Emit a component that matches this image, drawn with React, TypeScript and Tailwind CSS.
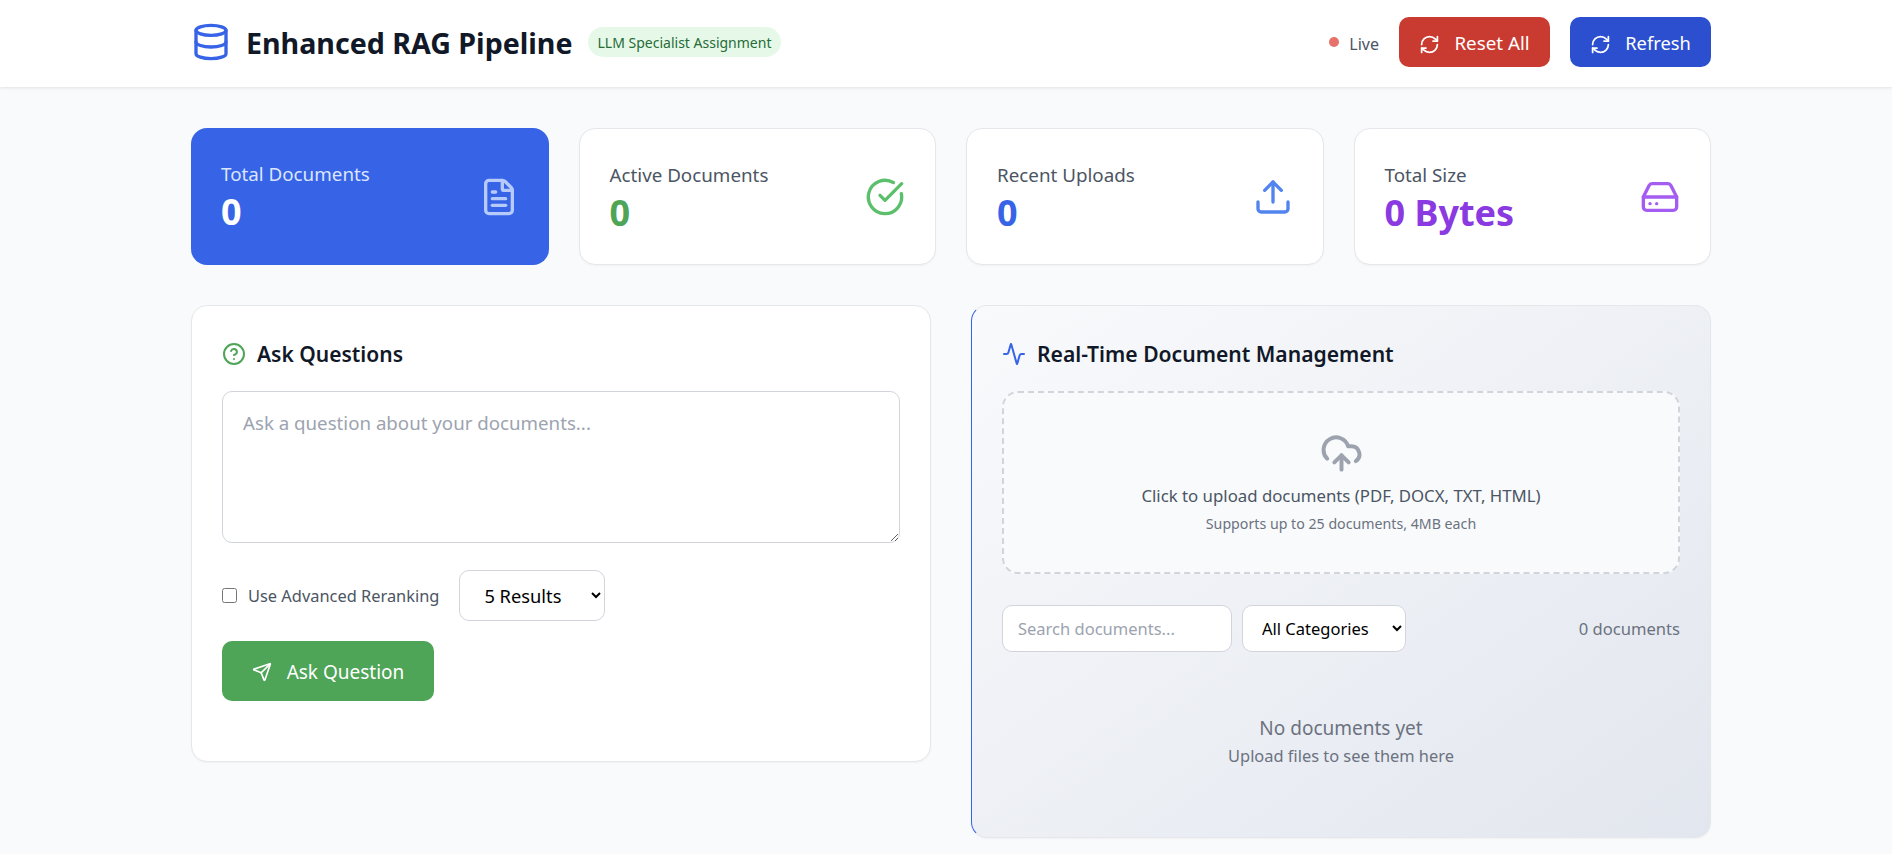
import { Activity, CircleCheckBig, CircleHelp, CloudUpload, Database, FileText, HardDrive, RefreshCw, Send, Upload } from 'lucide-react'

const stats = [
  { label: 'Active Documents', value: '0', valueClass: 'text-[#4ea457]', icon: <CircleCheckBig size={40} className="text-[#5cbf6b]" /> },
  { label: 'Recent Uploads', value: '0', valueClass: 'text-[#3763e6]', icon: <Upload size={40} className="text-[#5184ee]" /> },
  { label: 'Total Size', value: '0 Bytes', valueClass: 'text-[#8a3ae0]', icon: <HardDrive size={40} className="text-[#a55cf0]" /> },
]

export default function App() {
  return (
    <div className="min-h-[854px] bg-[#f9fafb] font-['Noto_Sans',sans-serif] text-[#111827]">
      {/* Header */}
      <header className="h-[87px] bg-white shadow-[0_1px_3px_rgba(0,0,0,0.1)] pl-[191px] pr-[181px] pb-[3px] flex items-center justify-between">
        <div className="flex items-center">
          <Database size={40} className="text-[#3763e6]" />
          <h1 className="ml-[15px] pt-[2px] text-[28.6px] font-bold leading-[36px] text-[#111827]">Enhanced RAG Pipeline</h1>
          <span className="ml-[15px] h-[30px] px-[10px] rounded-full bg-[#e6f9e9] text-[#276b38] text-[14px] flex items-center">LLM Specialist Assignment</span>
        </div>
        <div className="flex items-center">
          <span className="w-[10px] h-[10px] rounded-full bg-[#e5736c]" />
          <span className="ml-[10px] mt-[4px] text-[16px] text-[#4b5563]">Live</span>
          <button className="ml-[20px] h-[50px] w-[151px] pt-[2px] rounded-[10px] bg-[#c93a30] text-white text-[18.8px] flex items-center justify-center gap-[14px]">
            <RefreshCw size={21} className="mt-[3px]" />
            Reset All
          </button>
          <button className="ml-[20px] h-[50px] w-[141px] pt-[2px] rounded-[10px] bg-[#2c4fd0] text-white text-[18.3px] flex items-center justify-center gap-[14px]">
            <RefreshCw size={21} className="mt-[3px]" />
            Refresh
          </button>
        </div>
      </header>

      <main className="pl-[191px] pr-[181px] pt-[41px] pb-[16px]">
        {/* Stat cards */}
        <div className="grid grid-cols-4 gap-[30px]">
          <div className="h-[137px] rounded-[16px] bg-[#3763e6] p-[30px] flex items-center justify-between">
            <div className="pt-[3px]">
              <div className="text-[18.8px] leading-[28px] text-[#dbe6fe]">Total Documents</div>
              <div className="text-[36px] leading-[48px] font-bold text-white">0</div>
            </div>
            <FileText size={40} className="text-[#b6cbfb]" />
          </div>
          {stats.map((s) => (
            <div key={s.label} className="h-[137px] rounded-[16px] bg-white border border-[#e5e7eb] shadow-[0_1px_2px_rgba(0,0,0,0.04)] p-[30px] flex items-center justify-between">
              <div className="pt-[4px]">
                <div className="text-[18.8px] leading-[28px] text-[#4b5563]">{s.label}</div>
                <div className={`text-[36px] leading-[48px] font-bold ${s.valueClass}`}>{s.value}</div>
              </div>
              {s.icon}
            </div>
          ))}
        </div>

        <div className="mt-[40px] grid grid-cols-2 gap-[40px] items-start">
          {/* Ask questions */}
          <section className="h-[457px] rounded-[16px] bg-white border border-[#e5e7eb] shadow-[0_1px_2px_rgba(0,0,0,0.04)] p-[30px]">
            <h2 className="flex items-center gap-[11px] h-[36px] text-[21px] font-semibold text-[#111827]">
              <CircleHelp size={24} className="text-[#4ea457]" />
              <span className="mt-[2px]">Ask Questions</span>
            </h2>
            <textarea
              placeholder="Ask a question about your documents..."
              className="mt-[19px] block w-full h-[152px] rounded-[10px] border border-[#d1d5db] px-[20px] py-[17px] text-[18.7px] leading-[28px] placeholder:text-[#9ca3af] outline-none"
            />
            <div className="mt-[27px] flex items-center h-[51px]">
              <input type="checkbox" className="w-[15px] h-[15px]" />
              <label className="ml-[11px] mt-[2px] text-[16.4px] text-[#4b5563]">Use Advanced Reranking</label>
              <select className="ml-[20px] w-[146px] h-[51px] rounded-[10px] border border-[#d1d5db] bg-white pl-[20px] text-[18.3px] text-black">
                <option>5 Results</option>
              </select>
            </div>
            <button className="mt-[20px] w-[212px] h-[60px] pt-[2px] rounded-[10px] bg-[#4ea457] text-white text-[19px] flex items-center justify-center gap-[15px]">
              <Send size={20} />
              Ask Question
            </button>
          </section>

          {/* Document management */}
          <section className="h-[533px] rounded-[16px] border border-[#e5e7eb] border-l-[#3763e6] bg-gradient-to-br from-[#f9fafc] to-[#e2e6ee] shadow-[0_1px_2px_rgba(0,0,0,0.04)] p-[30px]">
            <h2 className="flex items-center gap-[11px] h-[36px] text-[21.1px] font-semibold text-[#111827]">
              <Activity size={24} className="text-[#3763e6]" />
              Real-Time Document Management
            </h2>
            <div className="mt-[19px] h-[183px] pt-[2px] rounded-[16px] border-2 border-dashed border-[#d1d5db] bg-[#f9fafc] flex flex-col items-center justify-center">
              <CloudUpload size={43} strokeWidth={2.2} className="text-[#9ca3af]" />
              <p className="mt-[7px] text-[16.8px] leading-[28px] text-[#4b5563]">Click to upload documents (PDF, DOCX, TXT, HTML)</p>
              <p className="mt-[2px] text-[14.2px] leading-[24px] text-[#6b7280]">Supports up to 25 documents, 4MB each</p>
            </div>
            <div className="mt-[31px] flex items-center">
              <input
                placeholder="Search documents..."
                className="w-[230px] h-[47px] rounded-[10px] border border-[#d1d5db] bg-white px-[15px] text-[16.5px] placeholder:text-[#9ca3af] outline-none"
              />
              <select className="ml-[10px] w-[164px] h-[47px] rounded-[10px] border border-[#d1d5db] bg-white pl-[15px] text-[16.5px] text-black">
                <option>All Categories</option>
              </select>
              <span className="ml-auto mt-[2px] text-[16.6px] text-[#6b7280]">0 documents</span>
            </div>
            <div className="mt-[62px] text-center text-[#6b7280]">
              <p className="text-[19px] leading-[28px]">No documents yet</p>
              <p className="mt-[1px] text-[16.4px] leading-[26px]">Upload files to see them here</p>
            </div>
          </section>
        </div>
      </main>
    </div>
  )
}
